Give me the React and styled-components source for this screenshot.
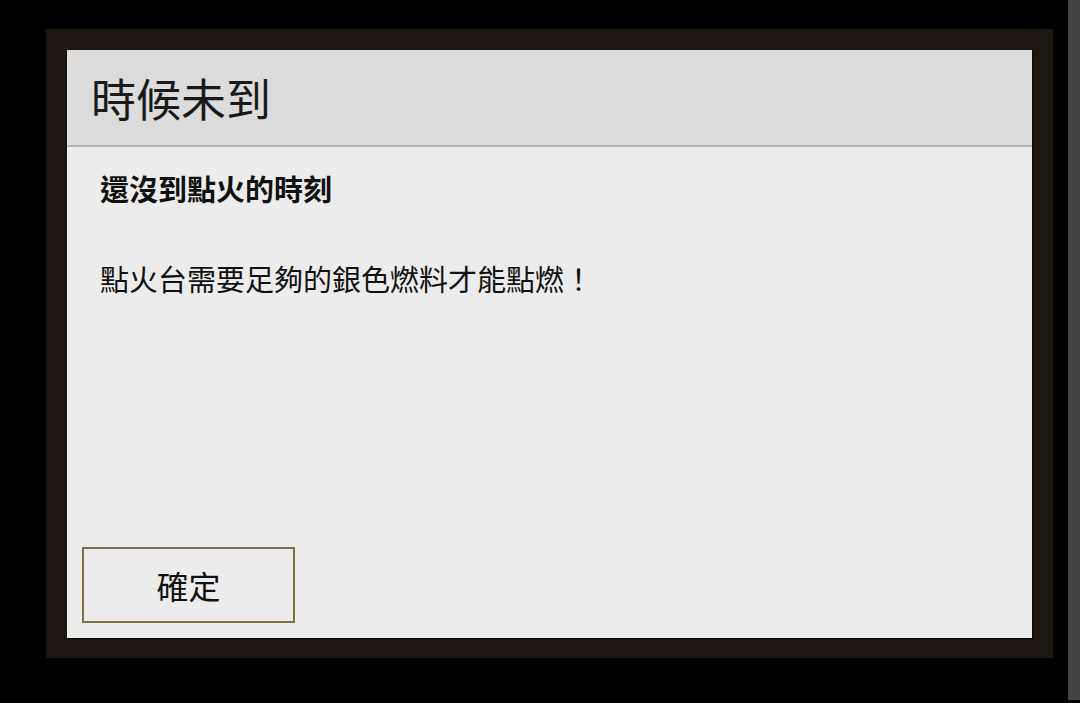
import React from "react";
import styled, { createGlobalStyle } from "styled-components";

const GlobalStyle = createGlobalStyle`
  html, body {
    margin: 0;
    padding: 0;
    background: #000;
  }
  body {
    font-family: "Noto Sans CJK TC", "Noto Sans", sans-serif;
  }
`;

const Screen = styled.div`
  width: 1080px;
  height: 703px;
  display: flex;
  background: #000;
  overflow: hidden;
`;

const Stage = styled.div`
  flex: 1;
  padding: 29px 0 0 46px;
`;

const SideStrip = styled.div`
  width: 12px;
  height: 700px;
  background: #434343;
`;

const Frame = styled.div`
  width: 1007px;
  height: 629px;
  box-sizing: border-box;
  padding: 21px 21px 20px 21px;
  background: #1e1710;
`;

const Dialog = styled.div`
  height: 100%;
  display: flex;
  flex-direction: column;
  background: #ececec;
  box-shadow: 1px 1px 1px rgba(0, 0, 0, 0.55);
`;

const Header = styled.div`
  height: 95px;
  display: flex;
  align-items: center;
  padding-left: 24px;
  background: #dcdcdc;
  border-bottom: 2px solid #b3b3b3;
`;

const Title = styled.h1`
  margin: 0;
  font-size: 45px;
  font-weight: 400;
  line-height: 1;
  color: #1a1a1a;
`;

const Body = styled.div`
  flex: 1;
  display: flex;
  flex-direction: column;
  padding: 23px 15px 15px;
`;

const Content = styled.div`
  flex: 1;
  padding-left: 18px;
`;

const Subtitle = styled.h2`
  margin: 0;
  font-size: 29px;
  line-height: 36px;
  font-weight: 700;
  color: #111;
`;

const Message = styled.p`
  margin: 54px 0 0;
  font-size: 29px;
  line-height: 36px;
  font-weight: 400;
  color: #111;
`;

const Button = styled.button`
  width: 213px;
  height: 76px;
  box-sizing: border-box;
  border: 2px solid #7c7142;
  background: #ececec;
  font-family: inherit;
  font-size: 32px;
  color: #111;
  cursor: pointer;
`;

const App = () => {
  return (
    <>
      <GlobalStyle />
      <Screen>
        <Stage>
          <Frame>
            <Dialog>
              <Header>
                <Title>時候未到</Title>
              </Header>
              <Body>
                <Content>
                  <Subtitle>還沒到點火的時刻</Subtitle>
                  <Message>點火台需要足夠的銀色燃料才能點燃！</Message>
                </Content>
                <div>
                  <Button>確定</Button>
                </div>
              </Body>
            </Dialog>
          </Frame>
        </Stage>
        <SideStrip />
      </Screen>
    </>
  );
};

export default App;
